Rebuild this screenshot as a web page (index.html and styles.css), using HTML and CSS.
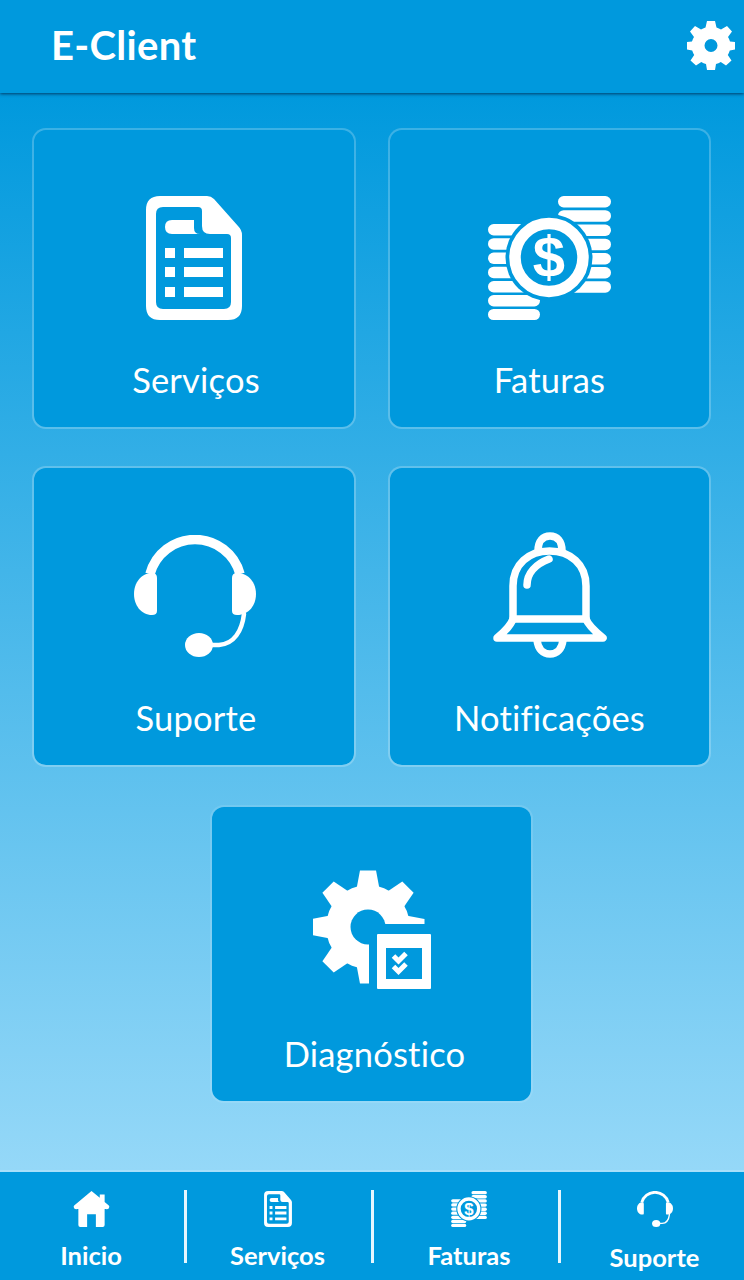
FILE: index.html
```html
<!DOCTYPE html>
<html lang="pt">
<head>
<meta charset="utf-8">
<title>E-Client</title>
<link rel="stylesheet" href="styles.css">
</head>
<body>
<svg class="defs" width="0" height="0" aria-hidden="true">
  <defs>
    <symbol id="i-doc" viewBox="0 0 96 124">
      <path fill="#fff" fill-rule="evenodd" d="M14 0H61Q65 0 68 3L92 30Q96 34 96 39V110Q96 124 82 124H14Q0 124 0 110V14Q0 0 14 0ZM17 11Q10 11 10 18V106Q10 113 17 113H78Q85 113 85 106V42Q85 38 81 38H64Q56 38 56 30V15Q56 11 52 11Z"/>
      <path fill="#fff" d="M26 24H48V32Q48 38 54 38H26Q19 38 19 31Q19 24 26 24Z"/>
      <path fill="#fff" d="M19 52H29V62H19ZM38 52H77V62H38ZM19 71H29V81H19ZM38 71H77V81H38ZM19 91H29V101H19ZM38 91H77V101H38Z"/>
    </symbol>
    <symbol id="i-coins" viewBox="0 0 123 124">
      <g fill="#fff">
        <rect x="70" y="0" width="53" height="11.5" rx="5.7"/>
        <rect x="70" y="14.2" width="53" height="11.5" rx="5.7"/>
        <rect x="70" y="28.5" width="53" height="11.5" rx="5.7"/>
        <rect x="70" y="42.7" width="53" height="11.5" rx="5.7"/>
        <rect x="70" y="57" width="53" height="11.5" rx="5.7"/>
        <rect x="70" y="71" width="53" height="11.5" rx="5.7"/>
        <rect x="70" y="85.2" width="53" height="11.5" rx="5.7"/>
        <rect x="0" y="28" width="52" height="11.5" rx="5.7"/>
        <rect x="0" y="42.2" width="52" height="11.5" rx="5.7"/>
        <rect x="0" y="56.5" width="52" height="11.5" rx="5.7"/>
        <rect x="0" y="70.7" width="52" height="11.5" rx="5.7"/>
        <rect x="0" y="85" width="52" height="11.5" rx="5.7"/>
        <rect x="0" y="99" width="52" height="11.5" rx="5.7"/>
        <rect x="0" y="113" width="52" height="11" rx="5.5"/>
      </g>
      <circle cx="61" cy="61.5" r="43.5" fill="#0099dd"/>
      <circle cx="61" cy="61.5" r="34" fill="none" stroke="#fff" stroke-width="11.500"/>
      <text class="dollar" x="61" y="81" text-anchor="middle">$</text>
    </symbol>
    <symbol id="i-head" viewBox="0 0 122 122">
      <path fill="none" stroke="#fff" stroke-width="9.500" d="M16 39A46.600 46.600 0 0 1 106 39"/>
      <path fill="#fff" d="M23 43Q23 38 18 38C7 38 0 48 0 59C0 70 7 80 18 80Q23 80 23 76Z"/>
      <path fill="#fff" d="M98 43Q98 38 103 38C115 38 122 48 122 59C122 70 115 80 103 80Q98 80 98 76Z"/>
      <path fill="none" stroke="#fff" stroke-width="4.500" stroke-linecap="round" d="M110 79C108 96 100 109 85 110L70 110"/>
      <ellipse cx="65" cy="110" rx="14" ry="12" fill="#fff"/>
    </symbol>
    <symbol id="i-bell" viewBox="0 0 114 126">
      <g fill="none" stroke="#fff" stroke-width="7.500" stroke-linecap="round" stroke-linejoin="round">
        <path d="M20 87V54C20 32 36 19 56.500 19C77 19 93 32 93 54V87C95 93 104 101 110 106H4C10 101 18 93 20 87Z"/>
        <path d="M20 87H93"/>
        <path d="M45 19C45 9 50 4 57 4C64 4 69 9 69 19"/>
        <path d="M44 108C45 117 50 122 57 122C64 122 69 117 70 108"/>
        <path d="M34 53C34 41 43 32 56 27"/>
      </g>
    </symbol>
    <g id="tooth"><polygon points="-8,-56.500 8,-56.500 11.500,-38 -11.500,-38" fill="#fff"/></g>
    <symbol id="i-diag" viewBox="0 0 118 119">
      <g transform="translate(55 57)">
        <circle r="42" fill="#fff"/>
        <use href="#tooth"/>
        <use href="#tooth" transform="rotate(45)"/>
        <use href="#tooth" transform="rotate(90)"/>
        <use href="#tooth" transform="rotate(135)"/>
        <use href="#tooth" transform="rotate(180)"/>
        <use href="#tooth" transform="rotate(225)"/>
        <use href="#tooth" transform="rotate(270)"/>
        <use href="#tooth" transform="rotate(315)"/>
        <circle r="17.500" fill="#0099dd"/>
      </g>
      <rect x="56" y="54" width="62" height="65" fill="#0099dd"/>
      <rect x="64" y="64" width="54" height="55" rx="1" fill="#fff"/>
      <rect x="73" y="78" width="36" height="31" fill="#0099dd"/>
      <path fill="none" stroke="#fff" stroke-width="5" d="M80.500 86L85.500 91L93 83.500M80.500 96.500L85.500 101.500L93 94"/>
    </symbol>
    <symbol id="i-cog" viewBox="0 0 48 49">
      <path fill="#fff" fill-rule="evenodd" d="M20 0H28L29.500 6.500Q32 7.300 34 8.500L40 5L45 10.500L41 16Q42.300 18 43 20.500L48 21V28.500L42.800 29.500Q42 32 40.800 34L44.500 39.500L39 44.500L33.800 41Q31.500 42.300 29 43L28 49H20L19 43Q16.500 42.300 14.300 41L9 44.500L3.500 39.500L7.200 34Q6 32 5.200 29.500L0 28.500V21L5 20.500Q5.700 18 7 16L3 10.500L8 5L14 8.500Q16 7.300 18.500 6.500ZM24 18A6.500 6.500 0 1 0 24 31A6.500 6.500 0 1 0 24 18Z"/>
    </symbol>
    <symbol id="i-home" viewBox="0 0 37 37">
      <path fill="#fff" d="M18.500 0L27 7V3.500H32V11.200L36.300 15Q37.500 16.200 36.200 18Q35 19 33 18.500H32V35Q32 37 30 37H23V24H14V37H7Q5 37 5 35V18.500H4Q2 19 .8 18Q-.5 16.200 .7 15Z"/>
    </symbol>
  </defs>
</svg>

<div class="app">
  <header class="topbar">
    <h1 class="brand">E-Client</h1>
    <svg class="cog"><use href="#i-cog"/></svg>
  </header>

  <main class="home">
    <div class="grid">
      <a class="card">
        <svg class="ico ico-doc"><use href="#i-doc"/></svg>
        <span class="card-label shift-a">Serviços</span>
      </a>
      <a class="card">
        <svg class="ico ico-coins"><use href="#i-coins"/></svg>
        <span class="card-label">Faturas</span>
      </a>
      <a class="card">
        <svg class="ico ico-head"><use href="#i-head"/></svg>
        <span class="card-label shift-a">Suporte</span>
      </a>
      <a class="card">
        <svg class="ico ico-bell"><use href="#i-bell"/></svg>
        <span class="card-label">Notificações</span>
      </a>
    </div>
    <a class="card card-solo">
      <svg class="ico ico-diag"><use href="#i-diag"/></svg>
      <span class="card-label shift-b">Diagnóstico</span>
    </a>
  </main>

  <nav class="tabbar">
    <a class="tab tab-a">
      <svg class="tab-ico t-home"><use href="#i-home"/></svg>
      <span class="tab-label">Inicio</span>
    </a>
    <a class="tab tab-b">
      <svg class="tab-ico t-doc"><use href="#i-doc"/></svg>
      <span class="tab-label">Serviços</span>
    </a>
    <a class="tab tab-c">
      <svg class="tab-ico t-coins"><use href="#i-coins"/></svg>
      <span class="tab-label">Faturas</span>
    </a>
    <a class="tab tab-d">
      <svg class="tab-ico t-head"><use href="#i-head"/></svg>
      <span class="tab-label low">Suporte</span>
    </a>
  </nav>
</div>
</body>
</html>
```
FILE: styles.css
```css
* { box-sizing: border-box; }
html, body { margin: 0; padding: 0; }
body { font-family: Lato, "Open Sans", sans-serif; color: #fff; background: #0099dd; }
.defs { position: absolute; }
.dollar { font-family: "Liberation Sans", sans-serif; font-size: 58px; font-weight: 700; fill: #fff; }

.app { width: 744px; height: 1280px; display: flex; flex-direction: column; overflow: hidden; }

.topbar {
  height: 93px; flex: none; position: relative; z-index: 2;
  display: flex; align-items: center; justify-content: space-between;
  padding: 0 9px 3px 51px;
  background: #0099dd;
  box-shadow: 0 1px 3px rgba(0, 50, 90, .9);
}
.brand { margin: 0; font-size: 40px; font-weight: 700; line-height: 1; letter-spacing: .3px; }
.cog { width: 48px; height: 49px; margin-top: 1px; }

.home {
  flex: 1; display: flex; flex-direction: column; align-items: center;
  padding: 35px 1px 0 0; gap: 38px;
  background: linear-gradient(#0099dd 0%, #95d8f8 100%);
}
.grid { display: grid; grid-template-columns: 324px 323px; column-gap: 32px; row-gap: 37px; }

.card {
  height: 301px; display: flex; flex-direction: column; align-items: center;
  padding-top: 66px;
  background: #0099dd;
  background-clip: padding-box;
  border: 2px solid rgba(255, 255, 255, .22);
  border-radius: 14px;
}
.card-solo { width: 323px; height: 298px; border-color: rgba(255, 255, 255, .1); }

.ico { display: block; flex: none; }
.ico-doc { width: 96px; height: 124px; }
.ico-coins { width: 123px; height: 124px; }
.ico-head { width: 122px; height: 122px; margin-top: 1px; margin-bottom: 1px; margin-left: 2px; }
.ico-bell { width: 114px; height: 126px; margin-top: -2px; }
.ico-diag { width: 118px; height: 119px; margin-top: -3px; }

.card-label { margin-top: 38px; font-size: 34.5px; line-height: 44px; letter-spacing: .2px; }
.ico-diag + .card-label { margin-top: 43px; }
.shift-a { margin-left: 4px; }
.shift-b { margin-left: 6px; }

.tabbar {
  height: 110px; flex: none; display: flex;
  background: #0099dd;
  border-top: 2px solid #a8e0fa;
}
.tab { position: relative; display: flex; flex-direction: column; align-items: center; padding-top: 19px; }
.tab-a { width: 185px; padding-right: 3px; }
.tab-b { width: 187px; padding-right: 2px; }
.tab-c { width: 187px; padding-left: 7px; }
.tab-d { width: 185px; padding-left: 6px; }
.tab-b::before, .tab-c::before, .tab-d::before {
  content: ""; position: absolute; left: -1px; top: 18px; width: 3px; height: 73px; background: #e6f6fe;
}
.tab-ico { display: block; flex: none; height: 36px; }
.t-home { width: 37px; }
.t-doc { width: 28px; }
.t-coins { width: 36px; }
.t-head { width: 36px; }
.tab-label { margin-top: 13px; font-size: 25.5px; font-weight: 700; line-height: 30px; }
.low { margin-top: 15px; }
```
